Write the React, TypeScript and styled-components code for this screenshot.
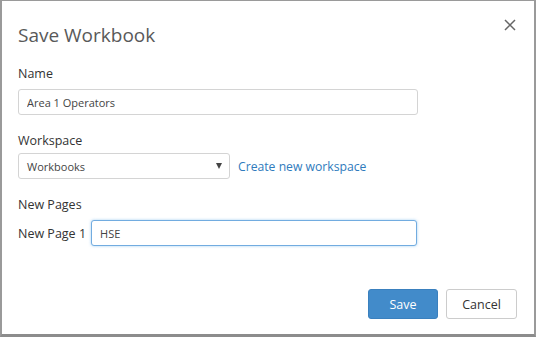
import styled, { createGlobalStyle } from "styled-components";

const GlobalStyle = createGlobalStyle`
  html, body {
    margin: 0;
    padding: 0;
    background: #ffffff;
  }
  * {
    box-sizing: border-box;
  }
`;

export default function App() {
  return (
    <>
      <GlobalStyle />
      <Dialog>
        <Header>
          <Title>Save Workbook</Title>
          <CloseButton aria-label="Close">
            <svg width="12" height="12" viewBox="0 0 12 12">
              <path
                d="M1 1 L11 11 M11 1 L1 11"
                stroke="#666"
                strokeWidth="1.5"
                fill="none"
              />
            </svg>
          </CloseButton>
        </Header>
        <Body>
          <Field>
            <Label>Name</Label>
            <TextInput defaultValue="Area 1 Operators" />
          </Field>
          <Field $gap="3px">
            <Label>Workspace</Label>
            <Row>
              <SelectBox>
                <span>Workbooks</span>
                <Caret />
              </SelectBox>
              <LinkText href="#">Create new workspace</LinkText>
            </Row>
          </Field>
          <Field>
            <Label>New Pages</Label>
            <Row>
              <InlineLabel>New Page 1</InlineLabel>
              <TextInput defaultValue="HSE" $focused $width="326px" />
            </Row>
          </Field>
        </Body>
        <Footer>
          <Button $primary $width="70px">Save</Button>
          <Button $width="71px">Cancel</Button>
        </Footer>
      </Dialog>
    </>
  );
}

const Dialog = styled.div`
  width: 536px;
  height: 337px;
  display: flex;
  flex-direction: column;
  background: #fff;
  border-style: solid;
  border-color: #9a9a9a;
  border-width: 1px 2px 3px 2px;
  border-bottom-color: #8c8c8c;
  font-family: "Segoe UI", "Open Sans", "Noto Sans", sans-serif;
  color: #333;
`;

const Header = styled.div`
  display: flex;
  justify-content: space-between;
  align-items: flex-start;
  padding: 21px 16px 0 16px;
`;

const Title = styled.h1`
  margin: 0;
  font-size: 19px;
  font-weight: 400;
  color: #595959;
  line-height: 26px;
`;

const CloseButton = styled.button`
  border: none;
  background: none;
  padding: 0;
  margin-top: -3px;
  margin-right: 2px;
  display: flex;
  cursor: pointer;
`;

const Body = styled.div`
  display: flex;
  flex-direction: column;
  gap: 17px;
  padding: 17px 16px 0 16px;
`;

const Field = styled.div<{ $gap?: string }>`
  display: flex;
  flex-direction: column;
  gap: ${(p) => p.$gap || "6px"};
`;

const Label = styled.label`
  font-size: 12.5px;
  line-height: 18px;
  color: #333;
`;

const Row = styled.div`
  display: flex;
  align-items: center;
  gap: 8px;
`;

const InlineLabel = styled.span`
  font-size: 12.5px;
  color: #333;
  margin-right: -3px;
  white-space: nowrap;
`;

const TextInput = styled.input<{ $focused?: boolean; $width?: string }>`
  width: ${(p) => p.$width || "400px"};
  height: 26px;
  padding: 0 8px;
  font-family: inherit;
  font-size: 11px;
  color: #444;
  border: 1px solid ${(p) => (p.$focused ? "#72ace0" : "#d4d4d4")};
  border-radius: 3px;
  outline: none;
  box-shadow: ${(p) =>
    p.$focused ? "0 0 3px rgba(102, 175, 233, 0.6)" : "none"};
`;

const SelectBox = styled.div`
  width: 212px;
  height: 26px;
  display: flex;
  align-items: center;
  justify-content: space-between;
  padding: 0 6px 0 8px;
  font-size: 11px;
  color: #444;
  border: 1px solid #d4d4d4;
  border-radius: 3px;
`;

const Caret = styled.span`
  width: 0;
  height: 0;
  border-left: 3.5px solid transparent;
  border-right: 3.5px solid transparent;
  border-top: 6px solid #444;
  margin-right: 1px;
`;

const LinkText = styled.a`
  font-size: 12.2px;
  color: #2f7bbd;
  text-decoration: none;
`;

const Footer = styled.div`
  margin-top: auto;
  display: flex;
  justify-content: flex-end;
  gap: 8px;
  padding: 0 17px 15px 0;
`;

const Button = styled.button<{ $primary?: boolean; $width?: string }>`
  height: 30px;
  width: ${(p) => p.$width || "auto"};
  padding: 0;
  font-family: inherit;
  font-size: 12.5px;
  border-radius: 3px;
  cursor: pointer;
  color: ${(p) => (p.$primary ? "#fff" : "#333")};
  background: ${(p) => (p.$primary ? "#428bca" : "#fff")};
  border: 1px solid ${(p) => (p.$primary ? "#3a80be" : "#ccc")};
`;
